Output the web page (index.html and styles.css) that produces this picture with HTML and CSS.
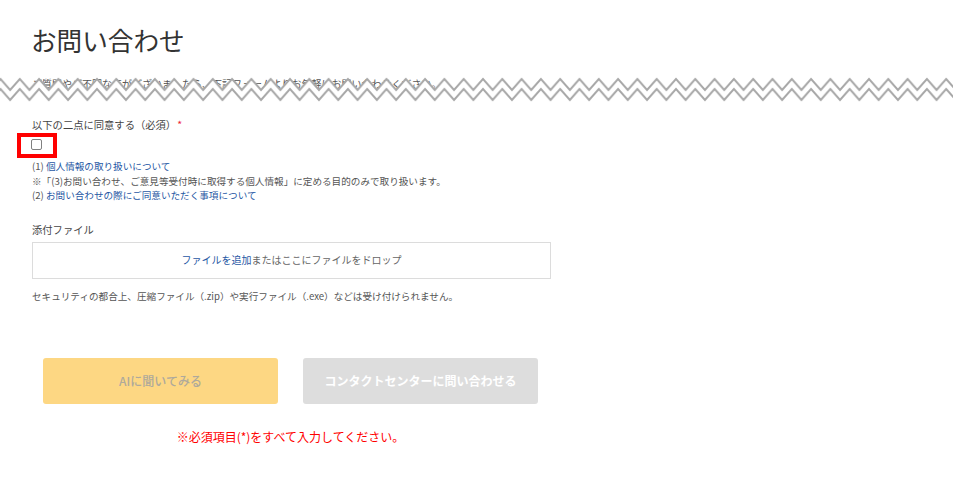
FILE: index.html
```html
<!DOCTYPE html>
<html lang="ja">
<head>
<meta charset="utf-8">
<title>お問い合わせ</title>
<link rel="stylesheet" href="styles.css">
</head>
<body>
<div class="page">
  <h1 class="title">お問い合わせ</h1>

  <div class="intro">
    <p class="intro-text">ご質問やご不明な点がございましたら、下記フォームよりお気軽にお問い合わせください。</p>
    <svg class="tear" width="953" height="36" viewBox="0 0 953 36" aria-hidden="true">
      <defs>
        <pattern id="zz" x="0.5" y="0" width="19.3" height="36" patternUnits="userSpaceOnUse">
          <path d="M0 7 L9.65 18 L19.3 7 L19.3 36 L0 36 Z" fill="#fff"/>
          <path d="M-9.65 18 L0 7 L9.65 18 L19.3 7 L28.95 18" fill="none" stroke="#a8a8a8" stroke-width="2"/>
          <path d="M-9.65 28 L0 17 L9.65 28 L19.3 17 L28.95 28" fill="none" stroke="#a8a8a8" stroke-width="2"/>
        </pattern>
      </defs>
      <rect x="0" y="0" width="953" height="36" fill="url(#zz)"/>
    </svg>
  </div>

  <div class="agree">
    <div class="label">以下の二点に同意する（必須）<span class="req">*</span></div>
    <div class="check-frame"><input class="check" type="checkbox" aria-label="同意する"></div>
    <div class="notes">
      <p>(1) <a class="link" href="#">個人情報の取り扱いについて</a></p>
      <p>※「(3)お問い合わせ、ご意見等受付時に取得する個人情報」に定める目的のみで取り扱います。</p>
      <p>(2) <a class="link" href="#">お問い合わせの際にご同意いただく事項について</a></p>
    </div>
  </div>

  <div class="attach">
    <div class="label">添付ファイル</div>
    <div class="dropzone"><a class="link" href="#">ファイルを追加</a>またはここにファイルをドロップ</div>
    <p class="hint">セキュリティの都合上、圧縮ファイル（.zip）や実行ファイル（.exe）などは受け付けられません。</p>
  </div>

  <div class="actions">
    <div class="buttons">
      <button class="btn btn-ai" type="button" disabled>AIに聞いてみる</button>
      <button class="btn btn-contact" type="button" disabled>コンタクトセンターに問い合わせる</button>
    </div>
    <p class="error">※必須項目(*)をすべて入力してください。</p>
  </div>
</div>
</body>
</html>
```

FILE: styles.css
```css
* { box-sizing: border-box; }

html, body {
  margin: 0;
  padding: 0;
  background: #fff;
}

body {
  font-family: "Noto Sans CJK JP", "Noto Sans", sans-serif;
  color: #444;
  font-size: 10px;
  line-height: 14px;
}

p { margin: 0; }

.page {
  width: 953px;
  padding-bottom: 20px;
}

.title {
  margin: 21px 0 0 31px;
  font-size: 25.6px;
  line-height: 38px;
  font-weight: 400;
  color: #333;
}

.intro {
  position: relative;
  margin-top: 18px;
  height: 14px;
}

.intro-text {
  margin-left: 32px;
  color: #555;
  white-space: nowrap;
}

.tear {
  position: absolute;
  left: 0;
  top: -5px;
  display: block;
}

.agree {
  margin-top: 27px;
}

.label {
  margin-left: 32px;
  color: #444;
  font-size: 10.3px;
}

.req {
  color: #e23;
  margin-left: 1px;
}

.check-frame {
  margin: 1px 0 0 17px;
  width: 40px;
  height: 25px;
  border: 4px solid #f00;
  padding: 2px 0 0 10px;
}

.check {
  appearance: none;
  -webkit-appearance: none;
  display: block;
  margin: 0;
  width: 11px;
  height: 11px;
  border: 1px solid #808080;
  border-radius: 2px;
  background: #fff;
}

.notes {
  margin: 1px 0 0 32px;
  font-size: 9.6px;
  line-height: 14.5px;
  color: #555;
}

.link {
  color: #1f57a4;
  text-decoration: none;
}

.attach {
  margin-top: 20px;
}

.dropzone {
  margin: 5px 0 0 32px;
  width: 519px;
  height: 37px;
  border: 1px solid #dcdcdc;
  display: flex;
  align-items: center;
  justify-content: center;
  color: #666;
}

.hint {
  margin: 10px 0 0 32px;
  font-size: 9.6px;
  color: #555;
}

.actions {
  margin: 55px 0 0 43px;
  width: 495px;
}

.buttons {
  display: flex;
  gap: 25px;
}

.btn {
  width: 235px;
  height: 46px;
  border: none;
  border-radius: 3px;
  font-family: inherit;
  font-size: 12px;
  font-weight: 500;
  padding: 0;
}

.btn-ai {
  background: #fdd783;
  color: #aea99c;
}

.btn-contact {
  background: #dddddd;
  color: #fff;
  font-weight: 700;
}

.error {
  margin-top: 24px;
  text-align: center;
  font-size: 12px;
  line-height: 17px;
  color: #f00;
}
```
